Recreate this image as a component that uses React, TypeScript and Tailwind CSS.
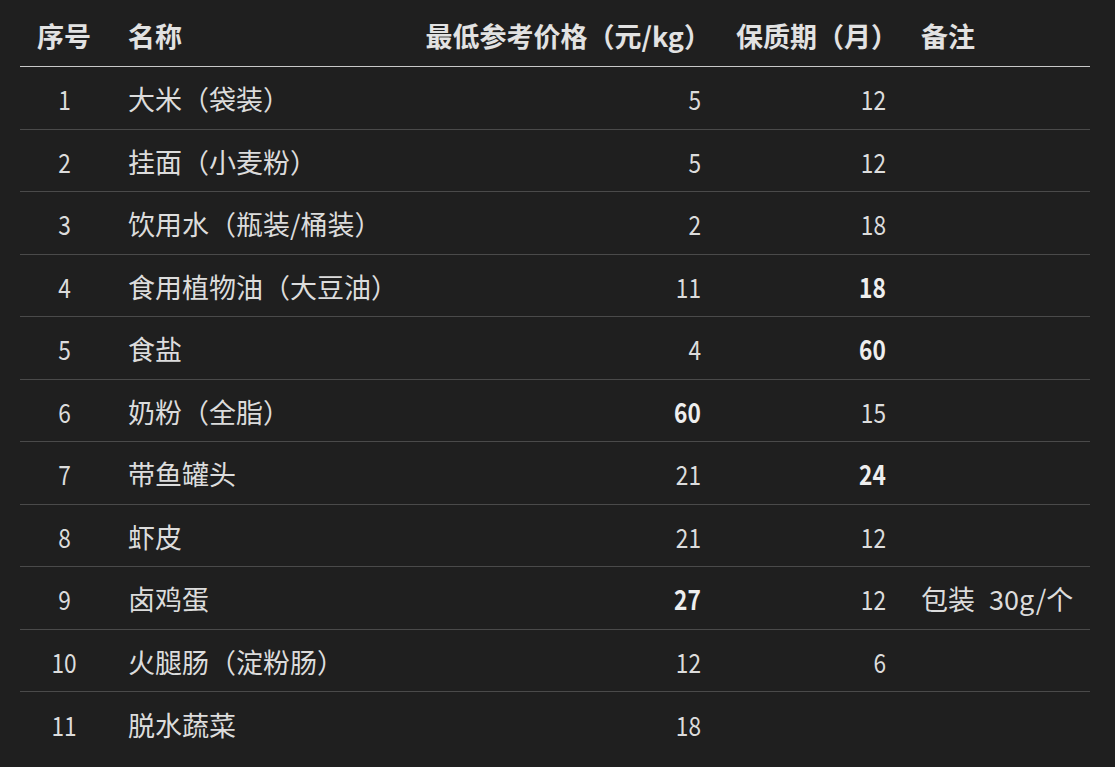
import React from "react";

type Row = {
  no: string;
  name: string;
  price: string;
  priceBold?: boolean;
  shelf: string;
  shelfBold?: boolean;
  note?: string;
};

const rows: Row[] = [
  { no: "1", name: "大米（袋装）", price: "5", shelf: "12" },
  { no: "2", name: "挂面（小麦粉）", price: "5", shelf: "12" },
  { no: "3", name: "饮用水（瓶装/桶装）", price: "2", shelf: "18" },
  { no: "4", name: "食用植物油（大豆油）", price: "11", shelf: "18", shelfBold: true },
  { no: "5", name: "食盐", price: "4", shelf: "60", shelfBold: true },
  { no: "6", name: "奶粉（全脂）", price: "60", priceBold: true, shelf: "15" },
  { no: "7", name: "带鱼罐头", price: "21", shelf: "24", shelfBold: true },
  { no: "8", name: "虾皮", price: "21", shelf: "12" },
  { no: "9", name: "卤鸡蛋", price: "27", priceBold: true, shelf: "12", note: "30g/个" },
  { no: "10", name: "火腿肠（淀粉肠）", price: "12", shelf: "6" },
  { no: "11", name: "脱水蔬菜", price: "18", shelf: "" },
];

function Num({ v, origin }: { v: string; origin: "center" | "right" }) {
  return (
    <span
      className={
        "inline-block scale-x-[0.84] " + (origin === "center" ? "origin-center" : "origin-right")
      }
    >
      {v}
    </span>
  );
}

export default function App() {
  return (
    <div
      className="w-[1115px] h-[767px] overflow-hidden bg-[#1f1f1f] text-[#dcdcdc] pl-[20px] pr-[25px]"
      style={{ fontFamily: '"Noto Sans CJK SC", "Noto Sans", sans-serif' }}
    >
      <div className="flex h-[67px] items-center pt-[7px] border-b border-[#c8c8c8] text-[27px] font-bold text-[#e2e2e2]">
        <div className="w-[88px] text-center">序号</div>
        <div className="w-[302px] pl-[20px]">名称</div>
        <div className="w-[302px] text-right pr-[1px] whitespace-nowrap">最低参考价格（元/kg）</div>
        <div className="w-[186px] text-right pr-0 whitespace-nowrap">保质期（月）</div>
        <div className="flex-1 pl-[23px]">备注</div>
      </div>
      {rows.map((r, i) => (
        <div
          key={r.no}
          className={
            "flex h-[62.5px] items-center pt-[3px] text-[27px] " +
            (i < rows.length - 1 ? "border-b border-[#4a4a4a]" : "")
          }
        >
          <div className="w-[88px] text-center">
            <Num v={r.no} origin="center" />
          </div>
          <div className="w-[302px] pl-[20px] whitespace-nowrap">{r.name}</div>
          <div className={"w-[302px] text-right pr-[11px] " + (r.priceBold ? "font-bold text-[#eeeeee]" : "")}>
            <Num v={r.price} origin="right" />
          </div>
          <div className={"w-[186px] text-right pr-[12px] " + (r.shelfBold ? "font-bold text-[#eeeeee]" : "")}>
            <Num v={r.shelf} origin="right" />
          </div>
          <div className="flex-1 pl-[23px] whitespace-nowrap">
            {r.note ? (
              <>
                包装
                <span className="inline-block ml-[14px]">{r.note}</span>
              </>
            ) : null}
          </div>
        </div>
      ))}
    </div>
  );
}
